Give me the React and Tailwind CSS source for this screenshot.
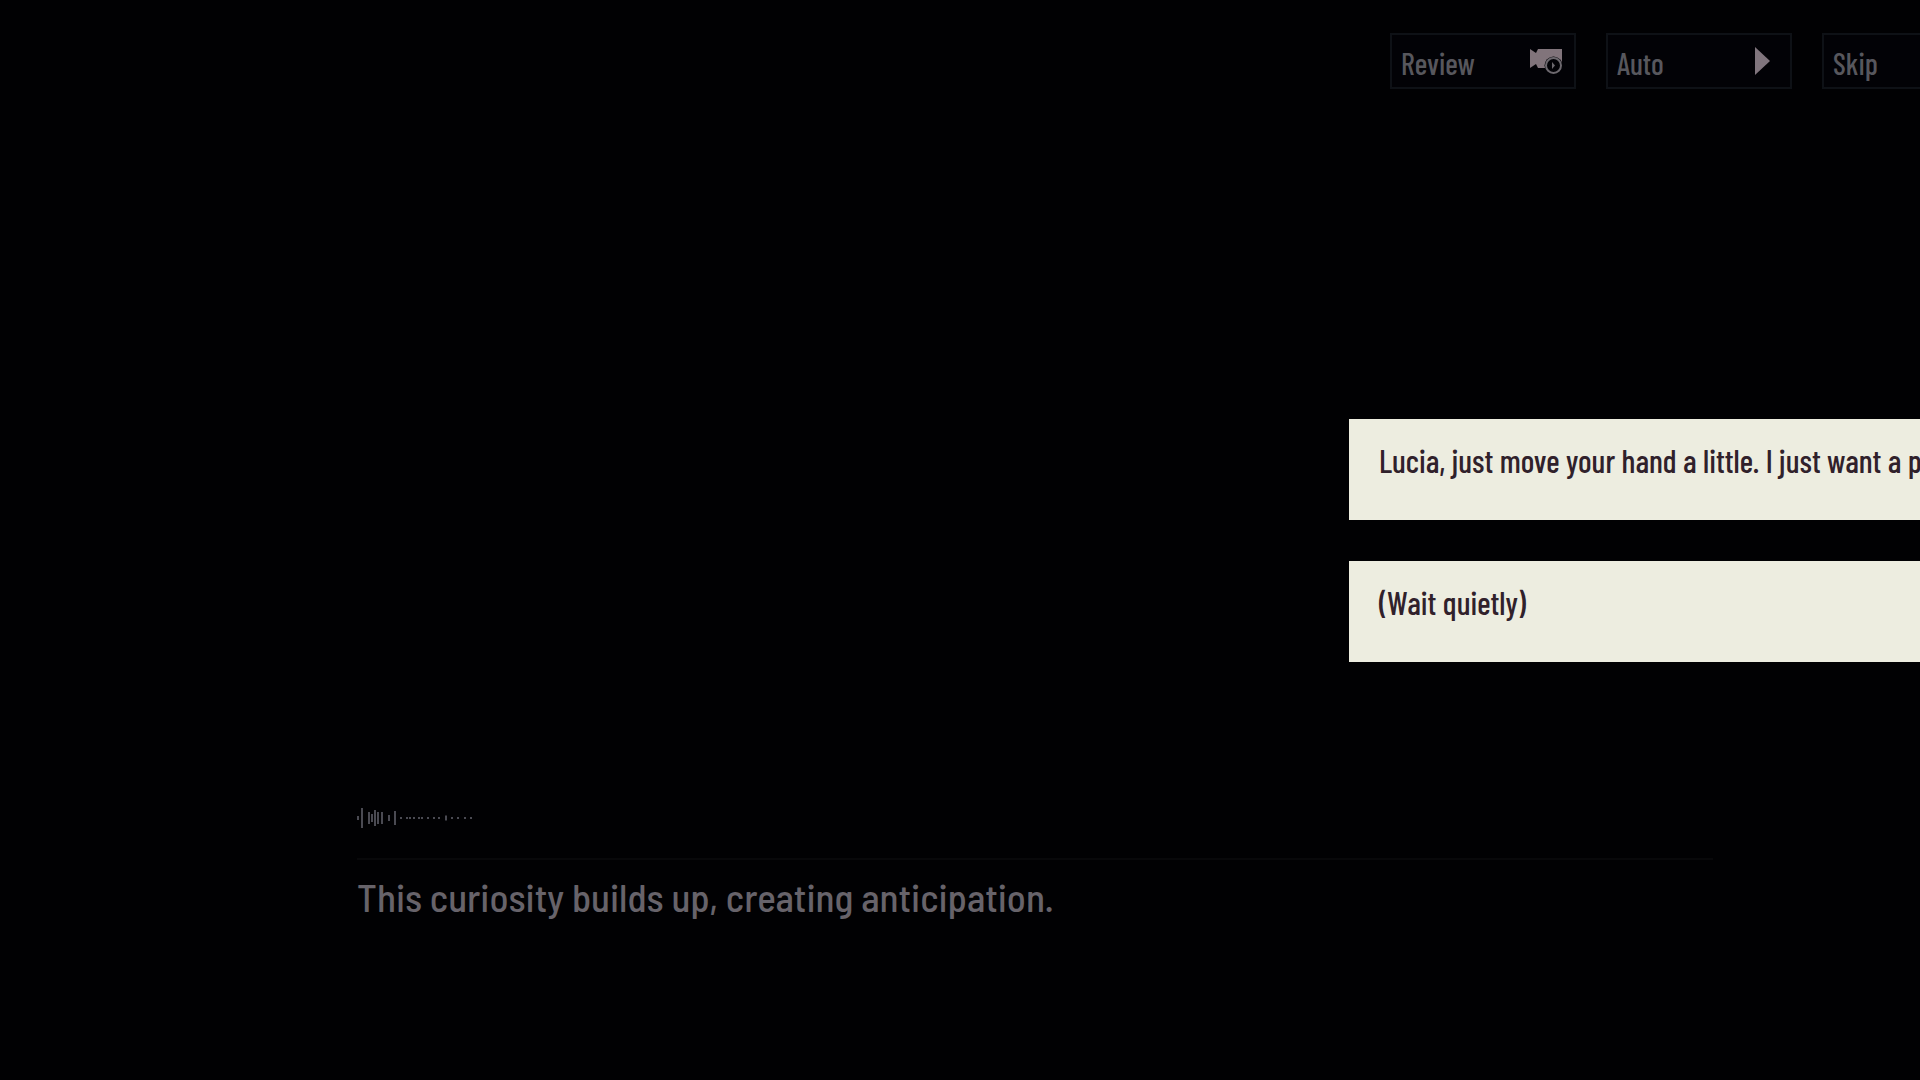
import React from "react";

const choices = [
  "Lucia, just move your hand a little. I just want a p",
  "(Wait quietly)",
];

// [x, height] of every bar in the voice strip
const voiceBars = [
  [0, 4],
  [4, 20],
  [11, 12],
  [14, 8],
  [17, 16],
  [20, 12],
  [24, 12],
  [31, 6],
  [37, 14],
  [43, 2],
  [49, 2],
  [52, 2],
  [56, 2],
  [61, 2],
  [64, 2],
  [70, 2],
  [76, 2],
  [81, 2],
  [88, 5],
  [94, 2],
  [100, 2],
  [107, 2],
  [113, 2],
];

const CameraIcon = () => (
  <svg width="33" height="28" viewBox="0 0 33 28" aria-hidden="true">
    <path d="M1 2 L7 6 L9 2 H33 V21 H9 L7 17 L1 21 Z" fill="#81747b" />
    <circle cx="24.5" cy="18.5" r="9" fill="#020206" />
    <circle cx="24.5" cy="18.5" r="7.5" fill="none" stroke="#6c686e" strokeWidth="2" />
    <path d="M23 15 L26 18.5 L23 22 Z" fill="#6c686e" />
  </svg>
);

const PlayIcon = () => (
  <svg width="15" height="28" viewBox="0 0 15 28" aria-hidden="true">
    <path d="M0 0 L15 14 L0 28 Z" fill="#80757d" />
  </svg>
);

const ControlButton = ({ label, children }) => (
  <button
    type="button"
    className="flex h-[56px] w-[186px] shrink-0 items-center justify-between border-2 border-[#0e1116] bg-[#020206] pr-3 pl-[9px] text-[30px] leading-9 font-medium text-[#57575d]"
  >
    <span className="pt-1">{label}</span>
    {children}
  </button>
);

const VoiceStrip = () => (
  <svg width="120" height="24" viewBox="0 0 120 24" fill="#4a4a52" aria-hidden="true">
    {voiceBars.map(([x, h]) => (
      <rect key={x} x={x} y={12 - h / 2} width="2" height={h} />
    ))}
  </svg>
);

export default function App() {
  return (
    <div className="min-h-screen overflow-hidden bg-[#010103] font-['Barlow_Condensed','Roboto_Condensed',sans-serif]">
      <header className="ml-[72.4%] flex gap-[30px] pt-[33px]">
        <ControlButton label="Review">
          <CameraIcon />
        </ControlButton>
        <ControlButton label="Auto">
          <span className="pr-2">
            <PlayIcon />
          </span>
        </ControlButton>
        <ControlButton label="Skip" />
      </header>

      <main>
        <div className="mt-[330px] ml-[70.26%] flex flex-col gap-[41px]">
          {choices.map((choice) => (
            <button
              key={choice}
              type="button"
              className="h-[101px] overflow-hidden bg-[#edede0] pb-5 pl-[30px] text-left text-[32px] leading-10 font-medium whitespace-nowrap text-[#30212b]"
            >
              {choice}
            </button>
          ))}
        </div>

        <section className="mt-36 mr-[10.8%] ml-[18.6%]">
          <VoiceStrip />
          <p className="mt-7 border-t-2 border-[#08080a] pt-3 font-['Barlow_Semi_Condensed','Barlow_Condensed',sans-serif] text-[39px] leading-[50px] font-medium text-[#67636a]">
            This curiosity builds up, creating anticipation.
          </p>
        </section>
      </main>
    </div>
  );
}
